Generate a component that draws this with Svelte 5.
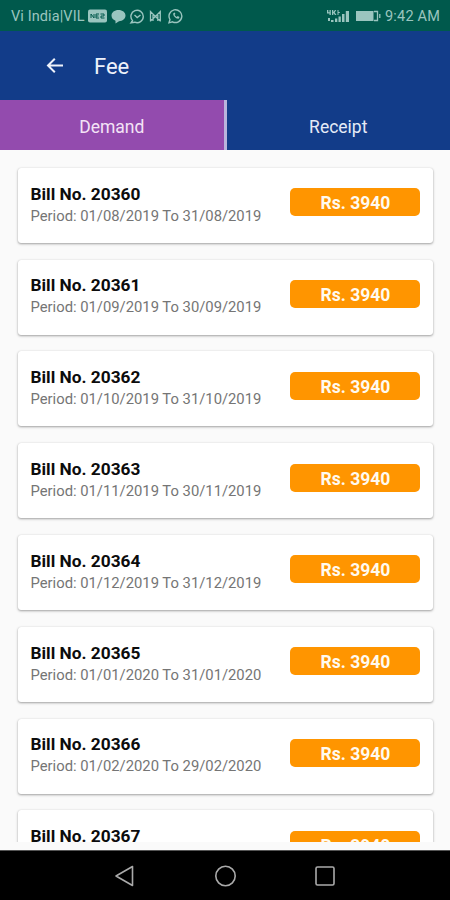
<script lang="ts">
  const amount = 'Rs. 3940';
  let activeTab = $state('Demand');

  const bills = [
    { no: 20360, from: '01/08/2019', to: '31/08/2019' },
    { no: 20361, from: '01/09/2019', to: '30/09/2019' },
    { no: 20362, from: '01/10/2019', to: '31/10/2019' },
    { no: 20363, from: '01/11/2019', to: '30/11/2019' },
    { no: 20364, from: '01/12/2019', to: '31/12/2019' },
    { no: 20365, from: '01/01/2020', to: '31/01/2020' },
    { no: 20366, from: '01/02/2020', to: '29/02/2020' },
    { no: 20367, from: '01/03/2020', to: '31/03/2020' },
  ];
</script>

<div class="screen">
  <div class="status-bar">
    <span class="carrier">Vi India|VIL</span>
    <svg class="notices" width="96" height="16" viewBox="0 0 96 16" fill="none" stroke="currentColor" stroke-width="1.4">
      <rect x="0" y="1.5" width="19" height="13" rx="2" fill="currentColor" stroke="none" />
      <path d="M3 10V6l3 4V6M11 6H8v4h3M8 8h2.5M12.5 6H16v2h-3v2h3.5" stroke="#00594c" stroke-width="1" />
      <path d="M30.5 2c4 0 7 2.3 7 5.6s-3 5.6-6.5 5.6l-3.5 2.2v-2.7c-2.5-.8-4-2.6-4-5.1 0-3.3 3-5.6 7-5.6z" fill="currentColor" stroke="none" />
      <path d="M44.5 12.6a6.200 6.200 0 1 1 2.300 1.600L43 14.800zM46.500 7l2.700 2.500L52.500 7" />
      <path d="M62.500 13.500V3.500l4.900 5 4.900-5v10M65 13V7M69.800 13V7M63 12.500l4.400-4 4.400 4" stroke-width="1.3" />
      <path d="M82 11.500a6.400 6.400 0 1 1 2.500 2.300L81 14.800z" />
      <path d="M85.300 5.200c-.7 2.500 2.800 6 5.600 5.400l.6-1.500-1.800-1-.9.900c-1-.4-1.800-1.200-2.200-2.200l.8-.9-.7-1.500z" fill="currentColor" stroke="none" />
    </svg>
    <svg class="signal" width="55" height="16" viewBox="0 0 55 16" fill="currentColor">
      <path d="M0 2h1.300v2.300h1.200V2h1.300v5H2.500V5.500H0zM5 2h1.300v2L8 2h1.300L7.700 4.400 9.500 7H8L6.300 5v2H5zM10.500 2h1v2h1.300v1h-1.300v2h-1z" />
      <path d="M1 10h2v3H1zM4 12h2.500v2H4zM8 10.500h2.300V14H8zM11.500 8.500h2.300V14h-2.300zM15 6h2.500v8H15zM18.800 3H22v11h-3.200z" />
      <path d="M29 3h17.500v10H29z" />
      <path d="M47 3.500h3.500v9H47M52.800 6v4" fill="none" stroke="currentColor" stroke-width="1.3" />
    </svg>
    <span class="clock">9:42 AM</span>
  </div>

  <header class="app-bar">
    <svg width="18" height="18" viewBox="0 0 18 18" fill="none" stroke="currentColor" stroke-width="2">
      <path d="M17 8.500H2.500M8.800 1.700 2 8.500l6.800 6.800" />
    </svg>
    <h1>Fee</h1>
  </header>

  <div class="tabs">
    {#each ['Demand', 'Receipt'] as tab}
      <button class="tab" class:active={activeTab === tab} onclick={() => (activeTab = tab)}>{tab}</button>
    {/each}
  </div>

  <main class="list">
    {#each bills as bill (bill.no)}
      <div class="card">
        <div class="info">
          <div class="bill-no">Bill No. {bill.no}</div>
          <div class="period">Period: {bill.from} To {bill.to}</div>
        </div>
        <div class="amount">{amount}</div>
      </div>
    {/each}
  </main>

  <nav class="nav-bar">
    <svg width="22" height="22" viewBox="0 0 22 22"><path d="M18.500 1.500v19L2 11z" /></svg>
    <svg width="22" height="22" viewBox="0 0 22 22"><circle cx="11.5" cy="11" r="9.7" /></svg>
    <svg width="22" height="22" viewBox="0 0 22 22"><rect x="2" y="2" width="18" height="18" rx="1.5" /></svg>
  </nav>
</div>

<style>
  :global(body) { margin: 0; }
  .screen {
    display: flex; flex-direction: column;
    height: 900px; overflow: hidden; background: #fafafa;
    font-family: Roboto, "Liberation Sans", sans-serif;
  }

  .status-bar {
    flex: none; display: flex; align-items: center;
    height: 31px; box-sizing: border-box; padding: 1px 10px 0 11px;
    background: #00594c; color: #9ac5bf; font-size: 14.5px;
  }
  .carrier { width: 77px; white-space: nowrap; letter-spacing: 0.1px; }
  .signal { margin-left: auto; margin-right: 3px; }
  .clock { width: 55px; white-space: nowrap; letter-spacing: 0.2px; }

  .app-bar {
    flex: none; display: flex; align-items: center; gap: 30px;
    height: 69px; padding-left: 46px;
    background: #123c89; color: #eef2fb;
  }
  .app-bar h1 { margin: 2px 0 0; font-size: 22px; font-weight: 400; }

  .tabs { flex: none; display: flex; height: 50px; background: #123c89; }
  .tab {
    flex: 1; padding: 3px 0 0; border: none; background: none;
    color: #e5ebf7; font: inherit; font-size: 17.5px;
  }
  .tab:first-child { border-right: 3px solid #b9b5dc; }
  .tab.active { background: #934bae; color: #f3e3f6; }

  .list {
    flex: none; display: flex; flex-direction: column; gap: 16.8px;
    height: 692px; box-sizing: border-box; padding: 17.8px 17px 0 18px; overflow: hidden;
  }
  .card {
    flex: none; display: flex; justify-content: space-between;
    height: 75px; box-sizing: border-box; padding: 14.8px 12.6px 0 12.5px;
    background: #fff; border-radius: 3px;
    box-shadow: 0 1px 2.5px rgba(0, 0, 0, 0.36), 0 0 1px rgba(0, 0, 0, 0.15);
  }
  .bill-no { line-height: 22px; font-size: 17.3px; font-weight: 700; color: #0c0c0c; white-space: nowrap; }
  .period { margin-top: 1px; line-height: 21px; font-size: 14.8px; color: #757575; white-space: nowrap; }
  .amount {
    width: 130px; height: 28px; margin-top: 5.6px; border-radius: 5px;
    background: #ff9500; color: #fffaf0;
    font-size: 17.5px; font-weight: 700; line-height: 30px; text-align: center;
  }

  .nav-bar {
    flex: none; display: flex; justify-content: center; align-items: center; gap: 78px;
    height: 50px; margin-top: auto; box-sizing: border-box; border-top: 1px solid #555;
    background: #000;
  }
  .nav-bar svg { fill: none; stroke: #aaa; stroke-width: 1.6; stroke-linejoin: round; }
</style>
